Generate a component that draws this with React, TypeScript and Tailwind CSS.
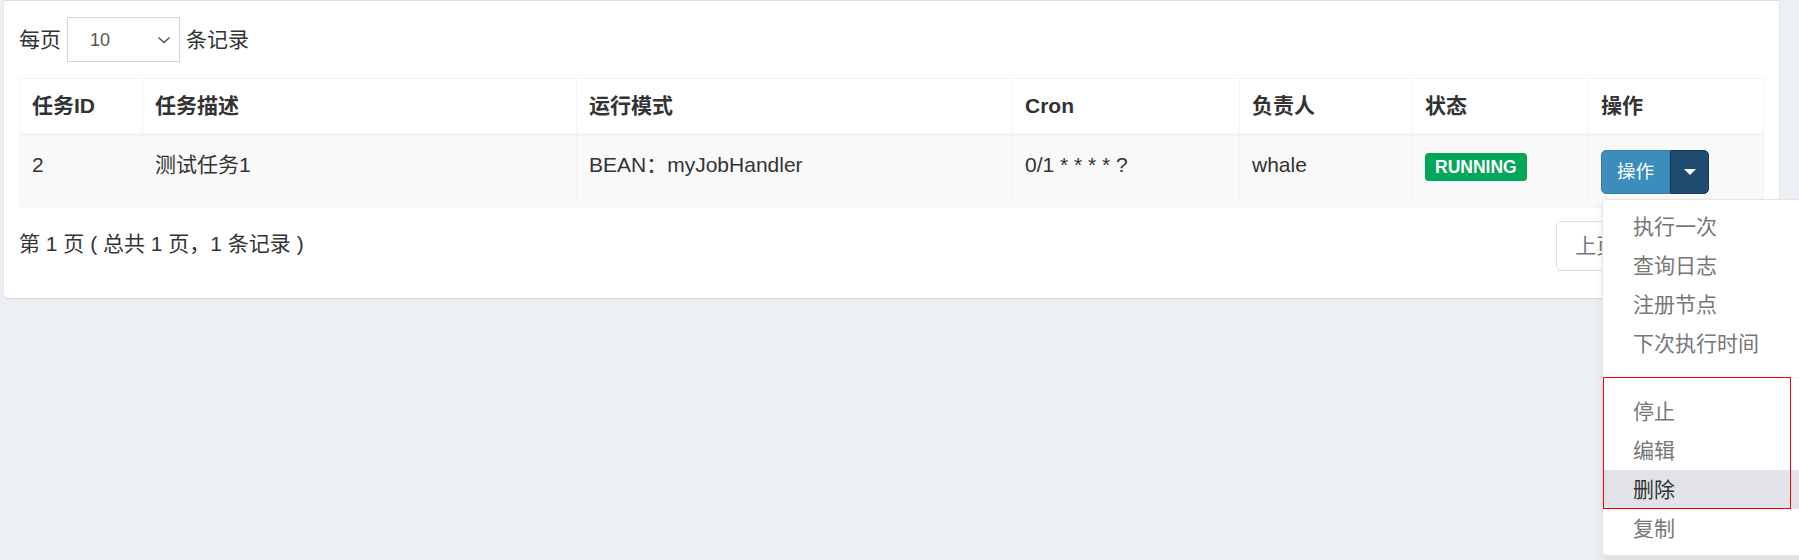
import React from 'react';

const columns = [
  { title: '任务ID', width: 123 },
  { title: '任务描述', width: 434 },
  { title: '运行模式', width: 436 },
  { title: 'Cron', width: 227 },
  { title: '负责人', width: 173 },
  { title: '状态', width: 176 },
  { title: '操作', width: 175 },
];

const menuTop = ['执行一次', '查询日志', '注册节点', '下次执行时间'];
const menuBottom = ['停止', '编辑', '删除', '复制'];

const ActionMenu = () => (
  <div className="relative inline-flex">
    <button className="h-[44px] rounded-l-[5px] border border-[#367fa9] bg-[#3c8dbc] px-[15px] text-[18.5px] leading-[30px] text-white">
      操作
    </button>
    <button className="flex h-[44px] w-[39px] items-center justify-center rounded-r-[5px] border border-[#173a5a] bg-[#1f4b70]">
      <span className="h-0 w-0 border-x-[6px] border-t-[6px] border-x-transparent border-t-white" />
    </button>

    {/* opened dropdown */}
    <div className="absolute left-[1px] top-[49px] z-10 w-[240px] rounded-[5px] border border-[#e5e5e5] bg-white py-[7px] shadow-[0_4px_10px_rgba(0,0,0,0.08)]">
      {menuTop.map((item) => (
        <div key={item} className="flex h-[39px] items-center px-[30px] text-[21px] text-[#777]">
          {item}
        </div>
      ))}
      <div className="my-[14px] h-px bg-[#eeeeee]" />
      {menuBottom.map((item) => (
        <div
          key={item}
          className={`flex h-[39px] items-center px-[30px] text-[21px] ${item === '删除' ? 'bg-[#e1e3e9] text-[#333]' : 'text-[#777]'}`}
        >
          {item}
        </div>
      ))}
      <div className="pointer-events-none absolute left-0 top-[177px] h-[132px] w-[188px] border border-[#ff0000]" />
    </div>
  </div>
);

export default function App() {
  return (
    <div className="relative h-[560px] w-[1799px] overflow-hidden bg-[#ecf0f5] font-['Liberation_Sans','Noto_Sans_CJK_SC',sans-serif] text-[21px] text-[#333]">
      <div className="ml-[4px] w-[1775px] rounded-b-[5px] border-t border-[#d8dce3] bg-white px-[15px] pb-[27px] pt-[16px] shadow-[0_1px_2px_rgba(0,0,0,0.12)]">
        <div className="flex items-center leading-[30px]">
          <span>每页</span>
          <div className="ml-[6px] flex h-[45px] w-[113px] items-center justify-between border border-[#d2d6de] bg-white pl-[22px] pr-[8px] text-[18px] text-[#555]">
            <span>10</span>
            <svg width="14" height="8" viewBox="0 0 14 8" fill="none">
              <polyline points="1.5,1.5 7,6.5 12.5,1.5" stroke="#555" strokeWidth="1.6" />
            </svg>
          </div>
          <span className="ml-[6px]">条记录</span>
        </div>

        <table className="mt-[16px] w-[1745px] table-fixed border-collapse">
          <colgroup>
            {columns.map((c) => (
              <col key={c.title} style={{ width: c.width }} />
            ))}
          </colgroup>
          <thead>
            <tr>
              {columns.map((c) => (
                <th
                  key={c.title}
                  className="border border-b-[3px] border-[#f4f4f4] px-[12px] py-[12px] text-left font-bold leading-[30px]"
                >
                  {c.title}
                </th>
              ))}
            </tr>
          </thead>
          <tbody>
            <tr className="bg-[#f9f9f9]">
              <td className="border border-[#f4f4f4] px-[12px] pb-[13px] pt-[14px] align-top leading-[30px]">2</td>
              <td className="border border-[#f4f4f4] px-[12px] pb-[13px] pt-[14px] align-top leading-[30px]">测试任务1</td>
              <td className="border border-[#f4f4f4] px-[12px] pb-[13px] pt-[14px] align-top leading-[30px]">BEAN：myJobHandler</td>
              <td className="border border-[#f4f4f4] px-[12px] pb-[13px] pt-[14px] align-top leading-[30px]">0/1 * * * * ?</td>
              <td className="border border-[#f4f4f4] px-[12px] pb-[13px] pt-[14px] align-top leading-[30px]">whale</td>
              <td className="border border-[#f4f4f4] px-[12px] pb-[13px] pt-[14px] align-top leading-[30px]">
                <span className="mt-[3px] inline-block h-[28px] rounded-[4px] bg-[#00a65a] px-[10px] text-[17.5px] font-bold leading-[28px] text-white">
                  RUNNING
                </span>
              </td>
              <td className="border border-[#f4f4f4] px-[12px] pb-[13px] pt-[14px] align-top leading-[30px]">
                <ActionMenu />
              </td>
            </tr>
          </tbody>
        </table>

        <div className="mt-[13px] flex items-start justify-between">
          <div className="pt-[8px] leading-[30px]">第 1 页 ( 总共 1 页，1 条记录 )</div>
          <div className="flex leading-[30px] text-[#777]">
            <span className="rounded-l-[5px] border border-[#ddd] bg-white px-[18px] py-[9px]">上页</span>
            <span className="-ml-px border border-[#ddd] bg-white px-[18px] py-[9px]">1</span>
            <span className="-ml-px rounded-r-[5px] border border-[#ddd] bg-white px-[18px] py-[9px]">下页</span>
          </div>
        </div>
      </div>
    </div>
  );
}
